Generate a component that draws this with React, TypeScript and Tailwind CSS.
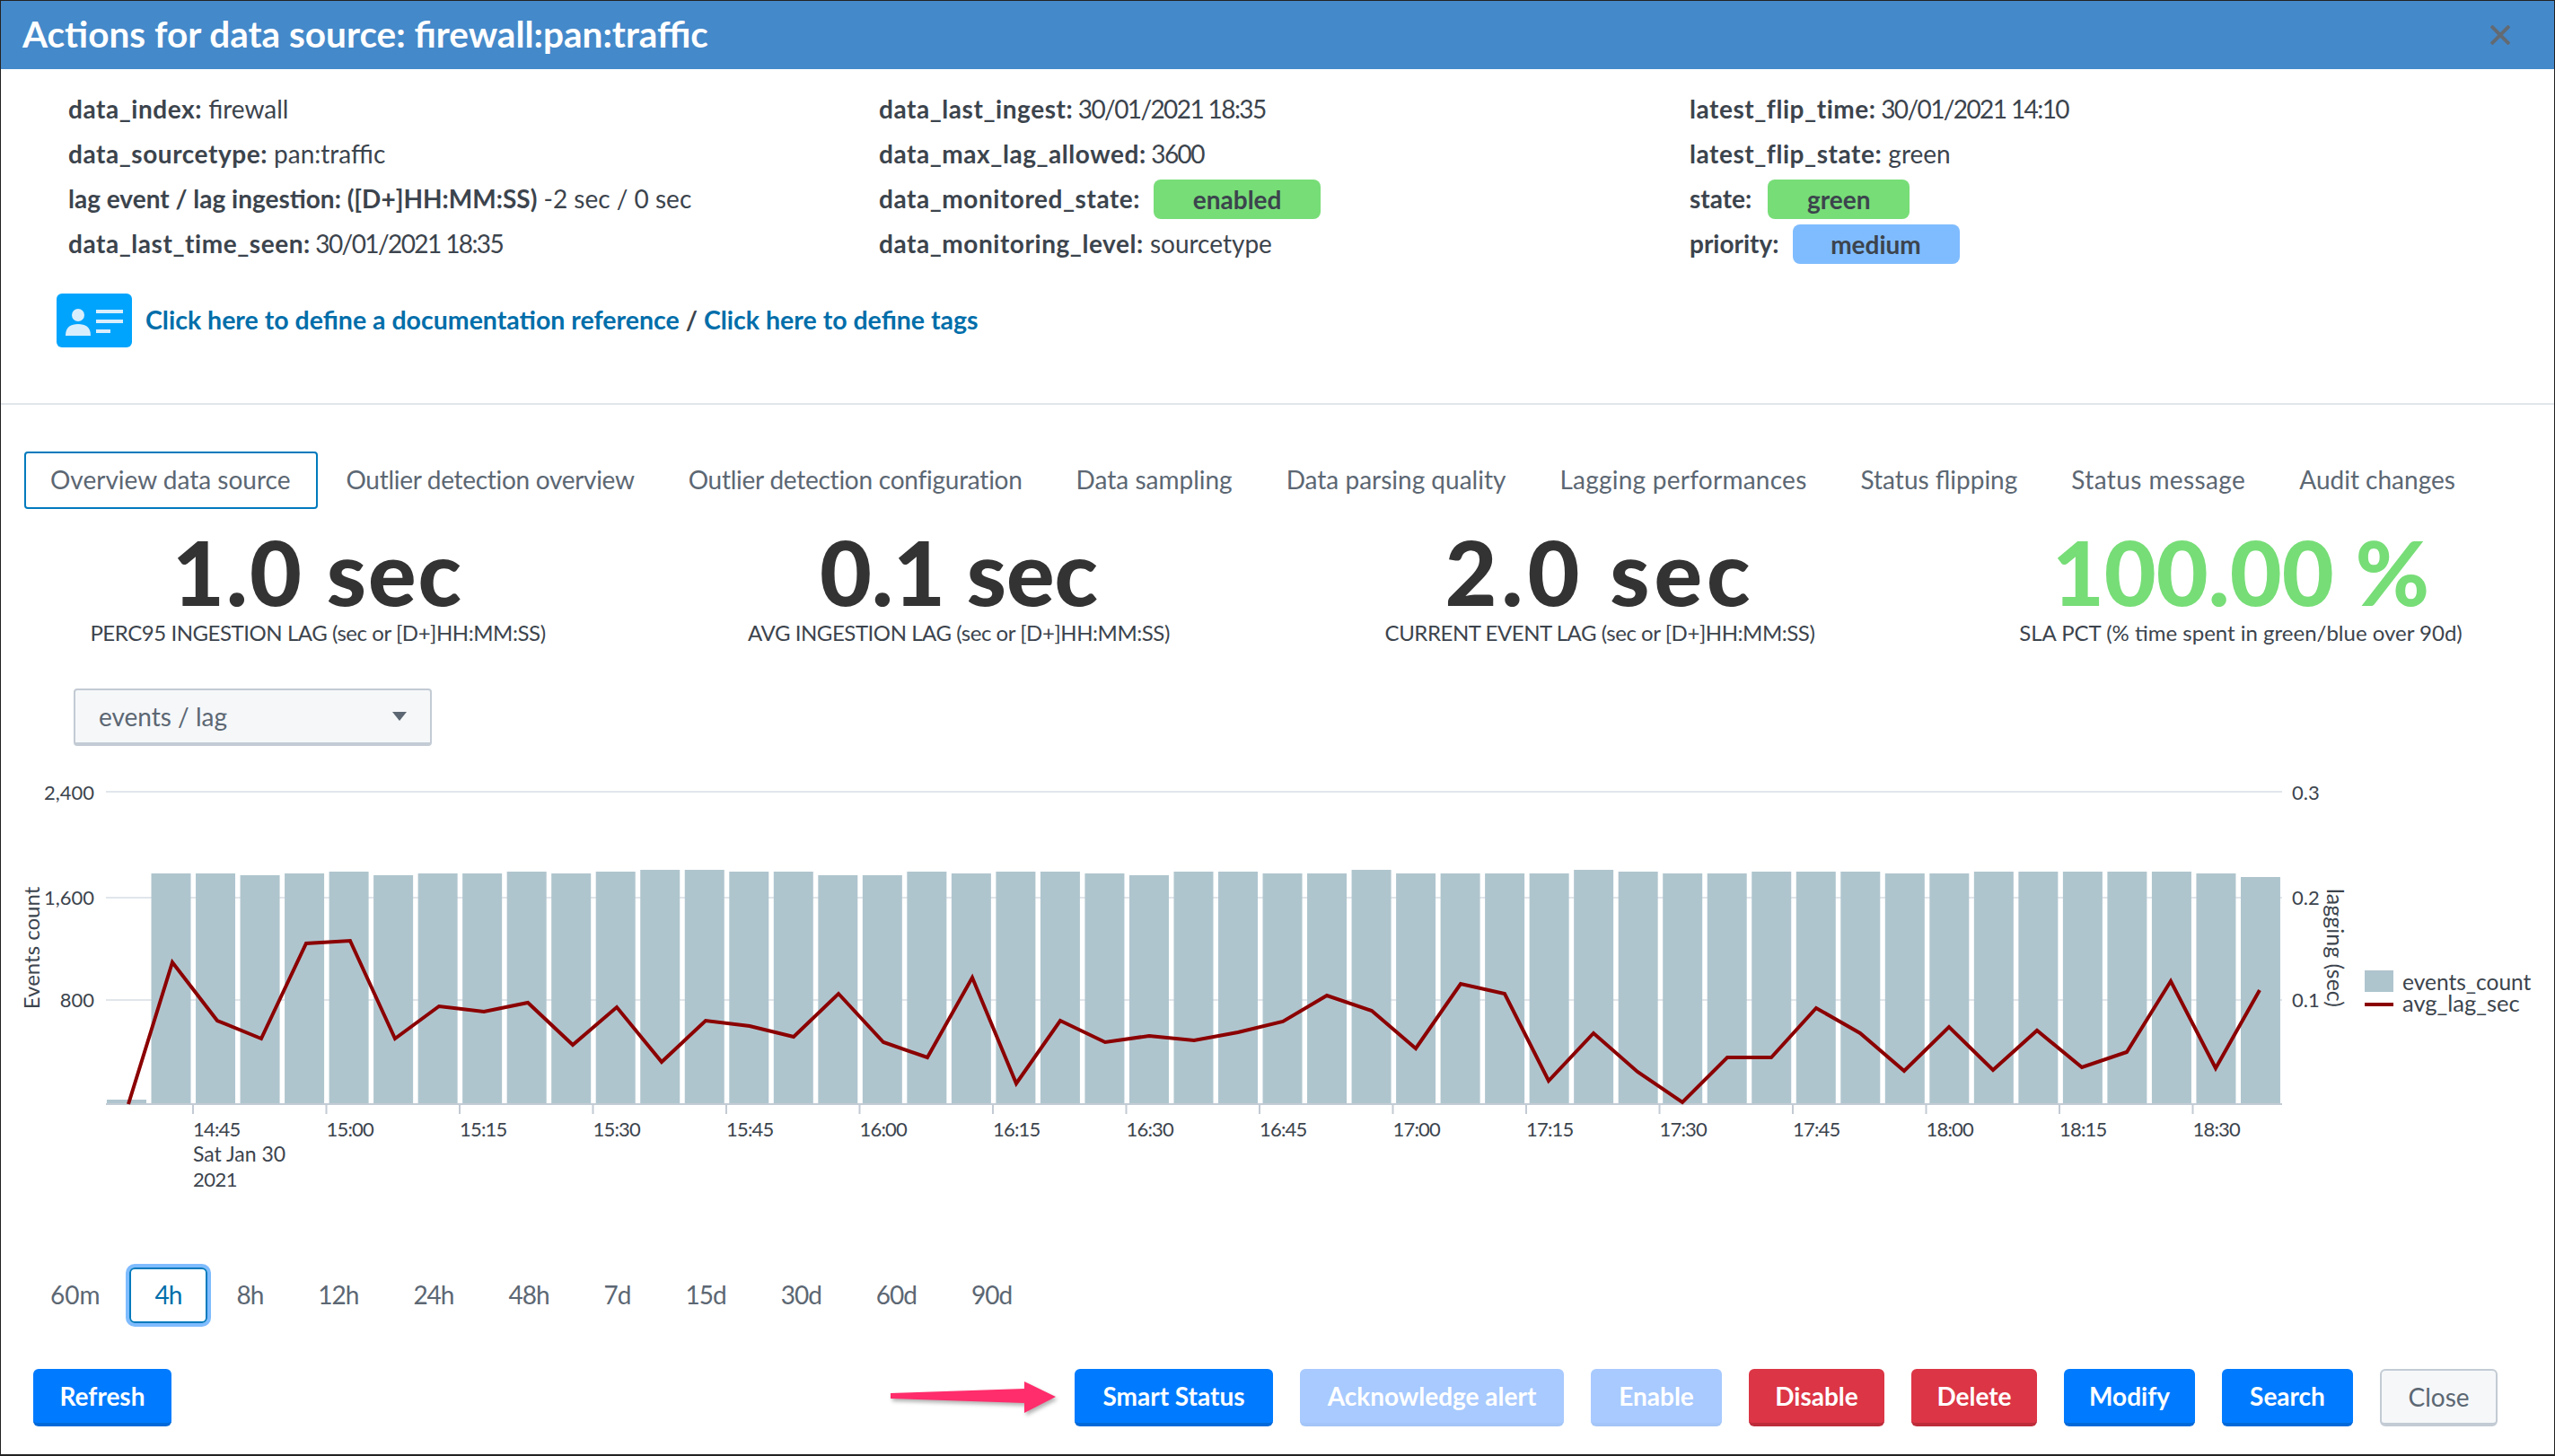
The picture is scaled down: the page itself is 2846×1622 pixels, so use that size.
import React from 'react';

const barTops = [1225, 973, 973, 975, 973, 971, 975, 973, 973, 971, 973, 971, 969, 969, 971, 971, 975, 975, 971, 973, 971, 971, 973, 975, 971, 971, 973, 973, 969, 973, 973, 973, 973, 969, 971, 973, 973, 971, 971, 971, 973, 973, 971, 971, 971, 971, 971, 973, 977];

const linePoints = [
  [142, 1230], [191, 1072], [241, 1137], [290, 1157], [340, 1051], [389, 1048], [439, 1157], [488, 1121], [538, 1127], [587, 1117],
  [637, 1164], [686, 1122], [736, 1183], [785, 1137], [834, 1143], [883, 1155], [933, 1107], [983, 1161], [1032, 1178], [1082, 1089],
  [1131, 1207], [1180, 1137], [1230, 1161], [1279, 1154], [1329, 1159], [1378, 1150], [1428, 1138], [1477, 1109], [1527, 1126], [1576, 1168],
  [1626, 1096], [1675, 1107], [1724, 1204], [1774, 1151], [1823, 1194], [1873, 1228], [1923, 1178], [1972, 1178], [2022, 1123], [2071, 1151],
  [2120, 1193], [2170, 1144], [2219, 1192], [2268, 1148], [2318, 1189], [2368, 1172], [2417, 1093], [2467, 1190], [2516, 1103],
];

const ticks = ['14:45', '15:00', '15:15', '15:30', '15:45', '16:00', '16:15', '16:30', '16:45', '17:00', '17:15', '17:30', '17:45', '18:00', '18:15', '18:30'];

const tabs = [
  { label: 'Overview data source', className: 'border-[#007abd] pr-[29px]' },
  { label: 'Outlier detection overview', className: 'border-transparent tracking-[-0.3px]' },
  { label: 'Outlier detection configuration', className: 'border-transparent tracking-[-0.25px]' },
  { label: 'Data sampling', className: 'border-transparent' },
  { label: 'Data parsing quality', className: 'border-transparent' },
  { label: 'Lagging performances', className: 'border-transparent tracking-[0.25px]' },
  { label: 'Status flipping', className: 'border-transparent' },
  { label: 'Status message', className: 'border-transparent tracking-[0.4px]' },
  { label: 'Audit changes', className: 'border-transparent' },
];

const kpis = [
  { value: '1.0 sec', label: 'PERC95 INGESTION LAG (sec or [D+]HH:MM:SS)', valueClass: 'text-[#333] tracking-[2px]', labelClass: 'tracking-[-0.45px]' },
  { value: '0.1 sec', label: 'AVG INGESTION LAG (sec or [D+]HH:MM:SS)', valueClass: 'text-[#333]', labelClass: 'tracking-[-0.45px]' },
  { value: '2.0 sec', label: 'CURRENT EVENT LAG (sec or [D+]HH:MM:SS)', valueClass: 'text-[#333] tracking-[5px]', labelClass: 'tracking-[-0.45px]' },
  { value: '100.00 %', label: 'SLA PCT (% time spent in green/blue over 90d)', valueClass: 'text-[#77dd77]', labelClass: '' },
];

const ranges = ['60m', '4h', '8h', '12h', '24h', '48h', '7d', '15d', '30d', '60d', '90d'];

const actions = [
  { label: 'Smart Status', className: 'w-[221px] bg-[#007bff] border-[#0069d9]' },
  { label: 'Acknowledge alert', className: 'w-[294px] bg-[#a8caff] border-[#a3c5f7]' },
  { label: 'Enable', className: 'w-[146px] bg-[#a8caff] border-[#a3c5f7]' },
  { label: 'Disable', className: 'w-[151px] bg-[#dc3545] border-[#bd2c3a]' },
  { label: 'Delete', className: 'w-[140px] bg-[#dc3545] border-[#bd2c3a]' },
  { label: 'Modify', className: 'w-[146px] bg-[#007bff] border-[#0069d9]' },
  { label: 'Search', className: 'w-[146px] bg-[#007bff] border-[#0069d9]' },
  { label: 'Close', className: 'w-[131px] bg-[#f5f7f9] border-2 border-[#c3cbd4] font-normal text-[#5c6773]' },
];

const Field = ({ name, children }: { name: string; children?: React.ReactNode }) => (
  <div className="h-[50px] pb-[2px] flex items-center whitespace-pre">
    <span className={`font-bold ${name.includes('_') ? 'tracking-[0.55px]' : ''}`}>{name}</span>
    {children}
  </div>
);

const Stamp = ({ children }: { children: React.ReactNode }) => <span className="tracking-[-1.6px]"> {children}</span>;

const Badge = ({ className, children }: { className: string; children: React.ReactNode }) => (
  <span className={`${className} h-[44px] mt-[2px] rounded-[8px] font-bold flex items-center justify-center`}>{children}</span>
);

const Chart = () => (
  <svg className="block" width="2846" height="470" viewBox="0 870 2846 470" fontFamily="Lato, sans-serif" fill="#3c444d">
    {[882, 1000, 1114].map((y) => (
      <line key={y} x1="117" x2="2541" y1={y} y2={y} stroke="#e1e6eb" strokeWidth="2" />
    ))}
    {barTops.map((top, i) => (
      <rect key={i} x={118 + i * 49.52} y={top} width="44" height={1229 - top} fill="#afc5ce" />
    ))}
    <line x1="117" x2="2541" y1="1230" y2="1230" stroke="#c3cbd4" strokeWidth="2" />
    {ticks.map((t, i) => {
      const x = 214 + i * 148.5;
      return (
        <g key={t}>
          <line x1={x} x2={x} y1="1230" y2="1241" stroke="#c3cbd4" strokeWidth="2" />
          <text x={x} y="1266" fontSize="22" letterSpacing="-0.8">{t}</text>
        </g>
      );
    })}
    <text x="214" y="1294" fontSize="23">Sat Jan 30</text>
    <text x="214" y="1322" fontSize="22" letterSpacing="-0.5">2021</text>
    <polyline points={linePoints.map((p) => p.join(',')).join(' ')} fill="none" stroke="#8b0000" strokeWidth="4" />
    <g fontSize="22" textAnchor="end">
      <text x="104" y="891">2,400</text>
      <text x="104" y="1008">1,600</text>
      <text x="104" y="1122">800</text>
    </g>
    <g fontSize="22">
      <text x="2552" y="891">0.3</text>
      <text x="2552" y="1008">0.2</text>
      <text x="2552" y="1122">0.1</text>
    </g>
    <text transform="translate(43 1056) rotate(-90)" fontSize="24" textAnchor="middle">Events count</text>
    <text transform="translate(2591 1056) rotate(90)" fontSize="25" textAnchor="middle">lagging (sec)</text>
    <rect x="2633" y="1081" width="32" height="24" fill="#afc5ce" />
    <line x1="2633" x2="2665" y1="1119" y2="1119" stroke="#8b0000" strokeWidth="4" />
    <text x="2675" y="1103" fontSize="24.5">events_count</text>
    <text x="2675" y="1127" fontSize="25.5">avg_lag_sec</text>
  </svg>
);

export default function App() {
  return (
    <div className="w-[2846px] h-[1622px] bg-white border border-[#222] border-b-2 overflow-hidden text-[28px] text-[#3c444d]" style={{ fontFamily: 'Lato, sans-serif' }}>
      <div className="h-[76px] bg-[#4489ca] flex items-center justify-between pl-[24px] pr-[49px]">
        <h1 className="text-[40.5px] font-bold text-white pb-[2px]">Actions for data source: firewall:pan:traffic</h1>
        <svg width="22" height="22" viewBox="0 0 22 22" stroke="#636a72" strokeWidth="4">
          <path d="M1 1 21 21M21 1 1 21" />
        </svg>
      </div>

      <div className="grid grid-cols-[903px_903px_1fr] pl-[75px] pt-[20px]">
        <div>
          <Field name="data_index:"> firewall</Field>
          <Field name="data_sourcetype:"> pan:traffic</Field>
          <Field name="lag event / lag ingestion: ([D+]HH:MM:SS)"> -2 sec / 0 sec</Field>
          <Field name="data_last_time_seen:"><Stamp>30/01/2021 18:35</Stamp></Field>
        </div>
        <div>
          <Field name="data_last_ingest:"><Stamp>30/01/2021 18:35</Stamp></Field>
          <Field name="data_max_lag_allowed:"><Stamp>3600</Stamp></Field>
          <Field name="data_monitored_state:"><Badge className="bg-[#77dd77] w-[186px] ml-[15px]">enabled</Badge></Field>
          <Field name="data_monitoring_level:"> sourcetype</Field>
        </div>
        <div>
          <Field name="latest_flip_time:"><Stamp>30/01/2021 14:10</Stamp></Field>
          <Field name="latest_flip_state:"> green</Field>
          <Field name="state:"><Badge className="bg-[#77dd77] w-[158px] ml-[18px]">green</Badge></Field>
          <Field name="priority:"><Badge className="bg-[#7fbcff] w-[186px] ml-[15px]">medium</Badge></Field>
        </div>
      </div>

      <div className="flex items-center gap-[15px] pl-[62px] mt-[30px] h-[60px]">
        <svg width="84" height="60" viewBox="0 0 84 60">
          <rect width="84" height="60" rx="6" fill="#00a4fd" />
          <circle cx="24" cy="24" r="7" fill="#d9eefc" />
          <path d="M10 47c0-10 6-13 14-13s14 3 14 13z" fill="#d9eefc" />
          <rect x="44" y="18" width="30" height="4" fill="#d9eefc" />
          <rect x="44" y="29" width="30" height="4" fill="#d9eefc" />
          <rect x="44" y="40" width="16" height="4" fill="#d9eefc" />
        </svg>
        <div className="font-bold whitespace-pre text-[28.5px] pb-[2px]">
          <span className="text-[#006eaa]">Click here to define a documentation reference</span>
          <span> / </span>
          <span className="text-[#006eaa]">Click here to define tags</span>
        </div>
      </div>

      <div className="h-[2px] bg-[#e1e6eb] mt-[62px]" />

      <div className="flex gap-[2px] pl-[26px] mt-[52px] text-[#5c6773]">
        {tabs.map((t) => (
          <div key={t.label} className={`h-[64px] px-[27px] pb-[2px] flex items-center whitespace-nowrap rounded-[4px] border-2 ${t.className}`}>{t.label}</div>
        ))}
      </div>

      <div className="grid grid-cols-4 w-[2856px] -ml-[4px] mt-[19px]">
        {kpis.map((k) => (
          <div key={k.label} className="flex flex-col items-center">
            <div className={`h-[100px] leading-[100px] text-[100px] font-black ${k.valueClass}`}>{k.value}</div>
            <div className={`h-[32px] leading-[32px] mt-[3px] text-[24px] whitespace-nowrap ${k.labelClass}`}>{k.label}</div>
          </div>
        ))}
      </div>

      <div className="ml-[81px] mt-[46px] w-[399px] h-[64px] bg-[#f5f7f9] border-2 border-b-4 border-[#c3cbd4] rounded-[4px] flex items-center justify-between pl-[26px] pr-[26px] text-[#5c6773]">
        <span>events / lag</span>
        <svg width="16" height="10" viewBox="0 0 16 10"><path d="M0 0h16L8 10z" fill="#5c6773" /></svg>
      </div>

      <div className="mt-[39px]"><Chart /></div>

      <div className="flex gap-[3px] pl-[26px] mt-[72px] text-[#5c6773]">
        {ranges.map((r) => (
          <div key={r} className={`h-[62px] px-[27px] pb-[2px] flex items-center rounded-[6px] border-2 ${r === '60m' ? '' : 'tracking-[-1px]'} ${r === '4h' ? 'border-[#007abd] text-[#006eaa] shadow-[0_0_0_4px_#7fbcff]' : 'border-transparent'}`}>{r}</div>
        ))}
      </div>

      <div className="flex justify-between pl-[36px] pr-[63px] mt-[51px] font-bold text-white">
        <button className="h-[64px] w-[154px] bg-[#007bff] border-b-4 border-[#0069d9] rounded-[6px]">Refresh</button>
        <div className="flex items-center">
          <svg width="190" height="40" viewBox="0 0 190 40" className="mr-[16px]" style={{ filter: 'drop-shadow(2px 3px 2px rgba(0,0,0,.3))' }}>
            <path d="M1 15 150 10V2L185 19 150 37V26L1 21z" fill="#ff2d6b" />
          </svg>
          <div className="flex gap-[30px]">
            {actions.map((a) => (
              <button key={a.label} className={`h-[64px] border-b-4 rounded-[6px] ${a.className}`}>{a.label}</button>
            ))}
          </div>
        </div>
      </div>
    </div>
  );
}
